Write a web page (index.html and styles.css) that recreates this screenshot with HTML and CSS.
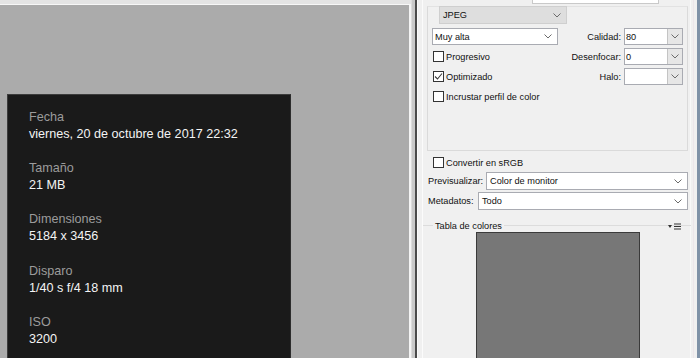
FILE: index.html
```html
<!DOCTYPE html>
<html lang="es">
<head>
<meta charset="utf-8">
<title>Guardar para Web</title>
<link rel="stylesheet" href="styles.css">
</head>
<body>
<div class="canvas-area">
  <div class="canvas">
    <div class="card">
      <div class="item"><div class="lbl">Fecha</div><div class="val">viernes, 20 de octubre de 2017 22:32</div></div>
      <div class="item"><div class="lbl">Tamaño</div><div class="val">21 MB</div></div>
      <div class="item"><div class="lbl">Dimensiones</div><div class="val">5184 x 3456</div></div>
      <div class="item"><div class="lbl">Disparo</div><div class="val">1/40 s f/4 18 mm</div></div>
      <div class="item"><div class="lbl">ISO</div><div class="val">3200</div></div>
    </div>
  </div>
</div>
<div class="splitter"></div>
<div class="panel">
  <div class="topfield"></div>
  <div class="settings">
    <div class="fmt"><span>JPEG</span><svg class="chev" width="8" height="5" viewBox="0 0 8 5"><polyline points="0.5,0.5 4,4 7.5,0.5"/></svg></div>
    <div class="row first">
      <div class="select quality"><span>Muy alta</span><svg class="chev" width="8" height="5" viewBox="0 0 8 5"><polyline points="0.5,0.5 4,4 7.5,0.5"/></svg></div>
      <div class="pair"><span class="plabel">Calidad:</span><div class="combo"><span class="cval">80</span><div class="cbtn"><svg class="chev" width="8" height="5" viewBox="0 0 8 5"><polyline points="0.5,0.5 4,4 7.5,0.5"/></svg></div></div></div>
    </div>
    <div class="row">
      <div class="check"><span class="box"></span><span>Progresivo</span></div>
      <div class="pair"><span class="plabel">Desenfocar:</span><div class="combo"><span class="cval">0</span><div class="cbtn"><svg class="chev" width="8" height="5" viewBox="0 0 8 5"><polyline points="0.5,0.5 4,4 7.5,0.5"/></svg></div></div></div>
    </div>
    <div class="row">
      <div class="check"><span class="box"><svg width="9" height="9" viewBox="0 0 9 9"><polyline points="1,4.5 3.5,7 8,1.5"/></svg></span><span>Optimizado</span></div>
      <div class="pair"><span class="plabel">Halo:</span><div class="combo"><span class="cval"></span><div class="cbtn"><svg class="chev" width="8" height="5" viewBox="0 0 8 5"><polyline points="0.5,0.5 4,4 7.5,0.5"/></svg></div></div></div>
    </div>
    <div class="row">
      <div class="check"><span class="box"></span><span>Incrustar perfil de color</span></div>
    </div>
  </div>
  <div class="check srgb"><span class="box"></span><span>Convertir en sRGB</span></div>
  <div class="field prev"><span class="flabel lprev">Previsualizar:</span><div class="select grow"><span>Color de monitor</span><svg class="chev" width="8" height="5" viewBox="0 0 8 5"><polyline points="0.5,0.5 4,4 7.5,0.5"/></svg></div></div>
  <div class="field meta"><span class="flabel lmeta">Metadatos:</span><div class="select grow"><span>Todo</span><svg class="chev" width="8" height="5" viewBox="0 0 8 5"><polyline points="0.5,0.5 4,4 7.5,0.5"/></svg></div></div>
  <div class="tabla">
    <div class="tabla-head"><span class="legend">Tabla de colores</span><span class="menu"><svg width="14" height="7" viewBox="0 0 14 7"><polygon points="0,2 4,2 2,5"/><rect x="6" y="0.5" width="7" height="1"/><rect x="6" y="3" width="7" height="1"/><rect x="6" y="5.5" width="7" height="1"/></svg></span></div>
    <div class="swatch"></div>
  </div>
</div>
<div class="winedge"></div>
</body>
</html>
```

FILE: styles.css
```css
* { box-sizing: border-box; }
html, body { margin: 0; padding: 0; }
body {
  width: 700px;
  height: 358px;
  overflow: hidden;
  display: flex;
  background: #f0f0f0;
  font-family: "Liberation Sans", Arial, sans-serif;
}

/* left preview canvas */
.canvas-area {
  width: 411px;
  padding-top: 4px;
  background: #e4e4e4;
  display: flex;
}
.canvas {
  flex: 1;
  overflow: hidden;
  background: #ababab;
  border-top: 1px solid #f7f7f7;
  border-right: 2px solid #f4f4f4;
  padding-top: 89px;
  padding-left: 7px;
}
.card {
  width: 284px;
  height: 268px;
  background: #1a1a1a;
  border: 1px solid #3c3c3c;
  border-right-color: #2c2c2c;
  border-bottom: 0;
  padding: 14px 0 0 21px;
  font-size: 12.6px;
}
.item { margin-bottom: 17.2px; }
.lbl { color: #9c9c9c; line-height: 17px; }
.val { color: #f4f4f4; line-height: 17px; }

.splitter {
  width: 6px;
  background: #c9c9c9;
  border-right: 2px solid #4a4a4a;
  border-left: 1px solid #dcdcdc;
}

/* right options panel */
.panel {
  width: 280px;
  display: flex;
  flex-direction: column;
  overflow: hidden;
  font-size: 9.2px;
  color: #111;
  background:
    linear-gradient(to right, transparent 4px, #fbfbfb 4px, #fbfbfb 5px, transparent 5px),
    linear-gradient(to left, transparent 6px, #f8f8f8 6px, #f8f8f8 7px, transparent 7px),
    linear-gradient(to left, #f0f0f0 3px, #ece6ea 3px, #ece6ea 4px, transparent 4px),
    #f0f0f0;
  border-left: 1px solid #fafafa;
}
.panel > * { flex-shrink: 0; }
.winedge { width: 3px; background: #7f92a7; }

.topfield {
  margin: -12px 0 0 114px;
  width: 127px;
  height: 16px;
  background: #fff;
  border: 1px solid #c9c9c9;
}

.chev { fill: none; stroke: #6b6b6b; stroke-width: 1; display: block; }

.settings {
  margin: 2px 0 0 9px;
  width: 261px;
  height: 145px;
  border: 1px solid #dadada;
  border-top-color: #e2e2e2;
  padding: 0 4px;
}
.fmt {
  margin: -1px 0 0 7px;
  width: 128px;
  height: 18px;
  background: #dedede;
  border: 1px solid #cfcfcf;
  display: flex;
  align-items: center;
  justify-content: space-between;
  padding: 0 5px 0 3px;
}
.row {
  display: flex;
  align-items: center;
  justify-content: space-between;
  height: 17px;
  margin-top: 3px;
}
.row.first { margin-top: 4px; }

.select {
  height: 17px;
  background: #fff;
  border: 1px solid #a9abb2;
  display: flex;
  align-items: center;
  justify-content: space-between;
  padding: 0 5px 0 2px;
}
.quality { width: 126px; }
.pair { display: flex; align-items: center; gap: 3px; }
.combo {
  width: 59px;
  height: 17px;
  background: #fff;
  border: 1px solid #a9abb2;
  display: flex;
  align-items: stretch;
}
.cval { flex: 1; padding-left: 1px; display: flex; align-items: center; }
.cbtn {
  width: 15px;
  background: #e6e6e6;
  border-left: 1px solid #c4c4c4;
  display: flex;
  align-items: center;
  justify-content: center;
}

.check { display: flex; align-items: center; gap: 2px; padding-left: 1px; }
.box {
  width: 11px;
  height: 11px;
  background: #fff;
  border: 1px solid #333;
  display: flex;
  align-items: center;
  justify-content: center;
}
.box svg { fill: none; stroke: #3a3a3a; stroke-width: 1.1; }

.srgb { margin: 3px 0 0 14px; height: 17px; }

.field {
  margin-left: 10px;
  width: 260px;
  display: flex;
  align-items: center;
  height: 18px;
}
.field.prev { margin-top: 1px; }
.field.meta { margin-top: 2px; }
.flabel { flex: none; }
.lprev { width: 58px; }
.lmeta { width: 50px; }
.grow { flex: 1; height: 18px; padding-left: 3px; }

.tabla {
  margin: 15px 0 0 5px;
  width: 268px;
  flex: 1 0 auto;
  border-top: 1px solid #dcdcdc;
}
.tabla-head {
  height: 0;
  display: flex;
  align-items: center;
  justify-content: space-between;
  padding: 0 9px 0 10px;
}
.legend { background: #f0f0f0; padding: 0 2px; }
.menu svg { display: block; fill: #333; }
.swatch {
  margin: 6px 0 0 53px;
  width: 164px;
  height: 130px;
  background: #777;
  border: 1px solid #3a3a3a;
}
```
